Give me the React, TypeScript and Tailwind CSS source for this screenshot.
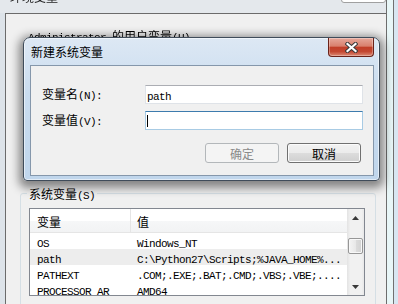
import React from "react";

const CJK_RUN = /[\u2E80-\u9FFF\uFF00-\uFFEF\u3000-\u303F]+|[^\u2E80-\u9FFF\uFF00-\uFFEF\u3000-\u303F]+/g;
const IS_CJK = /[\u2E80-\u9FFF\uFF00-\uFFEF\u3000-\u303F]/;

function T({ s, className = "" }: { s: string; className?: string }) {
  const runs = s.match(CJK_RUN) || [];
  return (
    <span className={"whitespace-pre " + className}>
      {runs.map((r, i) =>
        IS_CJK.test(r) ? (
          <span key={i} className="font-['Noto_Sans_CJK_SC',sans-serif] text-[12px]">
            {r}
          </span>
        ) : (
          <span key={i} className="font-['Liberation_Mono',monospace] text-[11px] tracking-[-0.6px]">
            {r}
          </span>
        )
      )}
    </span>
  );
}

const rows = [
  { name: "OS", value: "Windows_NT", sel: false },
  { name: "path", value: "C:\\Python27\\Scripts;%JAVA_HOME%...", sel: true },
  { name: "PATHEXT", value: ".COM;.EXE;.BAT;.CMD;.VBS;.VBE;....", sel: false },
  { name: "PROCESSOR_AR", value: "AMD64", sel: false },
];

function Arrow({ up }: { up: boolean }) {
  return (
    <svg width="7" height="4" viewBox="0 0 7 4">
      {up ? <polygon points="3.5,0 7,4 0,4" fill="#3a3a3a" /> : <polygon points="0,0 7,0 3.5,4" fill="#3a3a3a" />}
    </svg>
  );
}

export default function App() {
  return (
    <div className="w-[398px] h-[304px] overflow-hidden relative flex bg-[#e4e8ec] leading-none text-black select-none">
      {/* background window */}
      <div className="flex-1 flex flex-col min-w-0 h-full">
        <div className="h-[13px] shrink-0 flex items-start overflow-hidden">
          <div className="pl-[10px] -mt-[12px] leading-[16px] blur-[0.6px] text-[#222]">
            <T s="环境变量" />
          </div>
          <div className="flex-1" />
          <div className="w-[45px] h-[4px] -mt-px bg-white border border-[#a0a0a0] rounded-b-[3px]" />
        </div>
        <div className="flex-1 min-h-0 flex overflow-hidden">
          <div className="w-[6px] bg-[#dde3e9] border-r border-[#6b6b6b]" />
          <div className="flex-1 bg-[#f0f0f0] border-t border-[#6b6b6b] flex flex-col">
            <div className="pt-[13px] pl-[22px] leading-[16px] h-[29px] shrink-0 blur-[0.5px]">
              <T s="Administrator 的用户变量(U)" />
            </div>
            <div className="mt-[150px] ml-[14px] mr-[10px] h-[150px] shrink-0 border border-[#d5dfe5] rounded-[3px] relative pt-[14px] pl-[8px] pr-[10px]">
              <div className="absolute left-[6px] -top-[9px] px-[2px] bg-[#f0f0f0] leading-[16px]">
                <T s="系统变量(S)" />
              </div>
              <div className="h-[88px] border border-[#828790] bg-white flex overflow-hidden">
                <div className="flex-1 flex flex-col min-w-0">
                  <div className="h-[24px] flex shrink-0 border-b border-[#e5e5e5] bg-[linear-gradient(to_bottom,#ffffff_0%,#ffffff_50%,#f6f7f8_50%,#f2f3f4_100%)]">
                    <div className="w-[101px] border-r border-[#e5e5e5] pl-[7px] flex items-center">
                      <T s="变量" />
                    </div>
                    <div className="flex-1 pl-[6px] flex items-center">
                      <T s="值" />
                    </div>
                  </div>
                  {rows.map((r) => (
                    <div
                      key={r.name}
                      className={"h-[16px] flex shrink-0 items-center " + (r.sel ? "bg-[#ededed]" : "")}
                    >
                      <div className="w-[101px] pl-[7px] overflow-hidden">
                        <T s={r.name} />
                      </div>
                      <div className="flex-1 pl-[6px] overflow-hidden">
                        <T s={r.value} />
                      </div>
                    </div>
                  ))}
                </div>
                <div className="w-[17px] flex flex-col bg-[linear-gradient(to_right,#e3e3e3,#f1f1f1_20%,#f1f1f1_85%,#e8e8e8)]">
                  <div className="h-[17px] flex items-center justify-center">
                    <Arrow up />
                  </div>
                  <div className="mt-[12px] mx-[1px] h-[16px] border border-[#979797] rounded-[2px] bg-[linear-gradient(to_right,#f4f4f4,#e8e8e8_50%,#dcdcdc_50%,#d2d2d2)] shadow-[inset_0_0_0_1px_#f8f8f8]" />
                  <div className="flex-1" />
                  <div className="h-[17px] flex items-center justify-center">
                    <Arrow up={false} />
                  </div>
                </div>
              </div>
            </div>
          </div>
        </div>
      </div>
      <div className="w-[12px] flex border-l border-[#6d6d6d]">
        <div className="w-[6px] bg-[#e8f6f7]" />
        <div className="w-[1px] bg-[#707070]" />
        <div className="flex-1 bg-[#d8e6f1]" />
      </div>

      {/* modal dialog */}
      <div className="absolute left-[23px] top-[37px] w-[357px] h-[144px] rounded-t-[7px] rounded-b-[4px] border border-[#3f4c5a] bg-[linear-gradient(to_bottom,#dde8f4,#c9dcef_40%,#c0d6ec)] shadow-[inset_0_0_0_1px_rgba(255,255,255,0.55),0_3px_10px_4px_rgba(0,0,0,0.45)] flex flex-col">
        <div className="h-[27px] flex shrink-0">
          <div className="pl-[7px] flex items-center leading-[16px]">
            <T s="新建系统变量" />
          </div>
          <div className="flex-1" />
          <div className="mr-[5px] w-[46px] h-[19px] rounded-b-[4px] border border-t-0 border-[#6a2219] bg-[linear-gradient(to_bottom,#e6a89a_0%,#d9806d_45%,#c13f28_52%,#c34731_75%,#dc8a74_100%)] shadow-[inset_0_0_0_1px_rgba(255,255,255,0.3)] flex items-center justify-center">
            <svg width="13" height="11" viewBox="0 0 13 11">
              <path d="M2.5 2 L10.5 9 M10.5 2 L2.5 9" stroke="#3a3a3a" strokeWidth="4.2" strokeLinecap="square" />
              <path d="M2.5 2 L10.5 9 M10.5 2 L2.5 9" stroke="#ffffff" strokeWidth="2.2" strokeLinecap="square" />
            </svg>
          </div>
        </div>
        <div className="flex-1 ml-[6px] mr-[5px] mb-[4px] border border-[#8597ab] bg-[#f0f0f0] flex flex-col pt-[19px]">
          <div className="flex items-center">
            <div className="w-[114px] pl-[11px] leading-[16px]">
              <T s="变量名(N):" />
            </div>
            <div className="w-[218px] h-[19px] border border-[#dfe3e8] border-t-[#abadb3] bg-white pl-[1px] flex items-center">
              <T s="path" />
            </div>
          </div>
          <div className="flex items-center mt-[7px]">
            <div className="w-[114px] pl-[11px] leading-[16px]">
              <T s="变量值(V):" />
            </div>
            <div className="w-[218px] h-[19px] border border-[#a8cbe4] border-t-[#3d7bad] bg-white pl-[1px] flex items-center">
              <div className="w-px h-[12px] bg-black" />
            </div>
          </div>
          <div className="flex justify-end gap-[8px] mt-[13px] pr-[12px]">
            <div className="w-[74px] h-[20px] border border-[#b3b7ba] rounded-[3px] bg-[#f4f4f4] flex items-center justify-center leading-[16px] text-[#8a8a8a]">
              <T s="确定" />
            </div>
            <div className="w-[74px] h-[20px] border border-[#707070] rounded-[3px] bg-[linear-gradient(to_bottom,#f2f2f2_0%,#ebebeb_50%,#dddddd_50%,#cfcfcf_100%)] shadow-[inset_0_0_0_1px_#fbfbfb] flex items-center justify-center leading-[16px]">
              <T s="取消" />
            </div>
          </div>
        </div>
      </div>
    </div>
  );
}
